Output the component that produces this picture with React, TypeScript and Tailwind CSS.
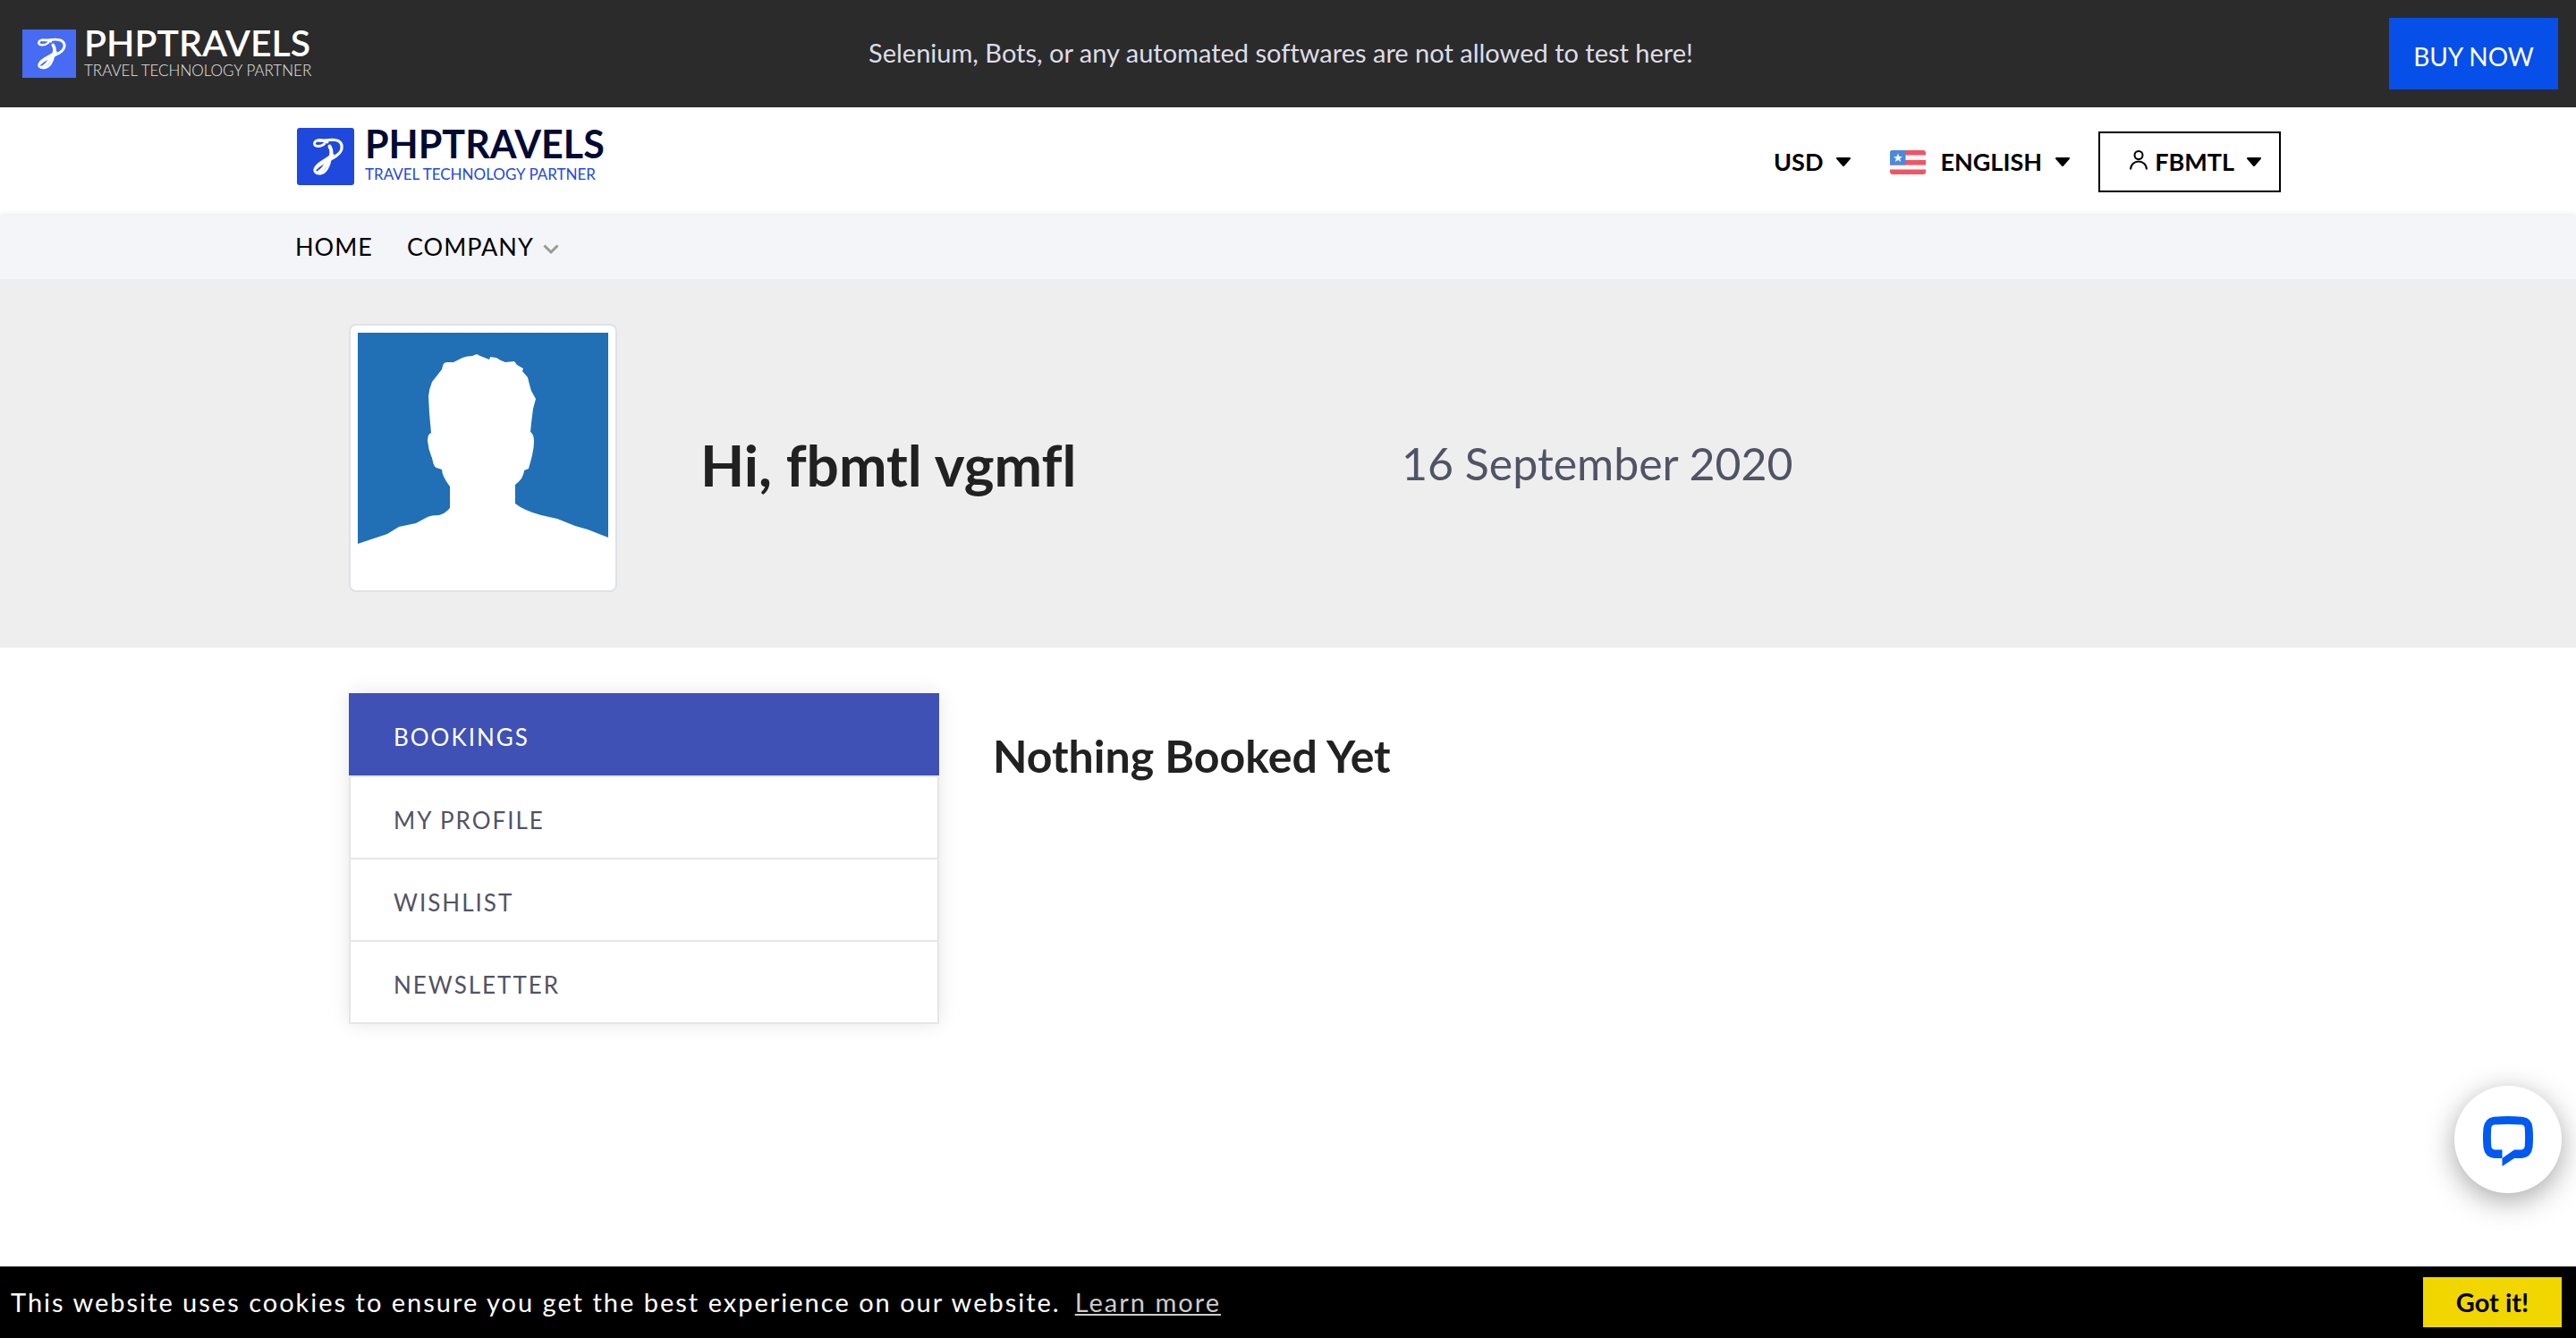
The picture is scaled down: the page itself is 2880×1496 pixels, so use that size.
type IconProps = { className?: string };

function RibbonMark({ className }: IconProps) {
  return (
    <svg viewBox="0 0 64 64" preserveAspectRatio="none" fill="none" stroke="#fff" strokeLinecap="round" strokeLinejoin="round" className={className} aria-hidden="true">
      <path d="M31 17.500C27 21.500 19.500 21.500 19.500 17.500C20 12.500 28 13 34 16" strokeWidth="2.800" />
      <path d="M24 14C30 15 36 12.500 42 13.500C49 14 51.500 19 49.500 25C46 34 28 37 21.500 45" strokeWidth="3.200" />
      <path d="M36.500 20.500C39.500 26 38.500 29 36.500 36" strokeWidth="4" />
      <path d="M37 35C36.500 42 32 50.500 26 51C20.500 51.500 18.500 48 21 44C25 38 34 35 40 30" strokeWidth="3" />
      <path d="M23.500 50C28 48 32 42 34.500 37" strokeWidth="4" />
    </svg>
  );
}

function Caret({ className }: IconProps) {
  return (
    <svg viewBox="0 0 16 10" className={className} aria-hidden="true">
      <path d="M1 1H15L8 9Z" fill="currentColor" stroke="currentColor" strokeWidth="2" strokeLinejoin="round" />
    </svg>
  );
}

function Flag({ className }: IconProps) {
  return (
    <svg viewBox="0 0 40 27" className={className} aria-hidden="true">
      <rect width="40" height="27" fill="#ef5565" />
      <rect y="5.500" width="40" height="5.500" fill="#f5f7fa" />
      <rect y="16.500" width="40" height="5" fill="#f5f7fa" />
      <rect width="17.500" height="16.500" fill="#4a89dc" />
      <path d="M9 3.500L10.400 7L14 7.200L11.200 9.500L12.200 13L9 11L5.800 13L6.800 9.500L4 7.200L7.600 7Z" fill="#f5f7fa" />
    </svg>
  );
}

function Avatar({ className }: IconProps) {
  return (
    <svg viewBox="0 0 280 280" className={className} role="img" aria-label="Profile photo">
      <rect width="280" height="280" fill="#fff" />
      <path
        fill="#216fb5"
        d="M0 0H280V229L257 220L243 216L223 208L205 204Q186 199 176 191V170Q181 166 183 163Q186 157 186 154L191 152L194 141Q197 130 197 122Q197 113 193 111L194 101L196 85L199 74L194 65L192 58L190 50L184 43L185 40L178 36L175 32L165 33L160 31L155 28L148 27L147 30L142 28L137 26L133 24L128 26Q122 26 117 28L107 33H100Q96 33 95 37L94 41L83 55Q80 62 79 71L80 90L82 112Q78 113 78 121Q79 131 83 140Q85 151 88 151L94 153Q94 160 103 172V196L100 199Q96 203 91 204Q82 204 78 206L65 213L46 217L33 225L0 236Z"
      />
    </svg>
  );
}

const menu = ["BOOKINGS", "MY PROFILE", "WISHLIST", "NEWSLETTER"];

export default function App() {
  return (
    <div className="flex min-h-screen flex-col bg-white font-['Lato',sans-serif] text-black [font-variant-ligatures:none]">
      <div className="grid h-[120px] grid-cols-[1fr_auto_1fr] items-center bg-[#2b2b2b] px-5">
        <a href="#" className="flex items-center gap-[9px] pl-[5px]">
          <span className="bg-[#476cf3]">
            <RibbonMark className="h-[54px] w-[60px]" />
          </span>
          <span className="flex flex-col gap-[3px] pb-[2px]">
            <span className="text-[41px] leading-9 font-semibold text-white">PHPTRAVELS</span>
            <span className="text-[17px] leading-5 font-light text-[#e6e6e6]">TRAVEL TECHNOLOGY PARTNER</span>
          </span>
        </a>
        <p className="pr-4 pb-[2px] text-[29px] text-[#dddde6]">Selenium, Bots, or any automated softwares are not allowed to test here!</p>
        <a href="#" className="flex h-20 w-[189px] items-center justify-center justify-self-end bg-[#064fe8] pt-[6px] text-[28px] text-white">
          BUY NOW
        </a>
      </div>

      <header className="h-[121px] bg-white">
        <div className="mx-auto flex max-w-[2220px] items-start justify-between pt-[23px]">
          <a href="#" className="flex items-center gap-3 pl-[2px]">
            <span className="rounded-[3px] bg-[#1f48dc]">
              <RibbonMark className="size-16" />
            </span>
            <span className="flex flex-col gap-1">
              <span className="text-[43px] leading-9 font-bold text-[#000a33]">PHPTRAVELS</span>
              <span className="text-[17px] leading-6 text-[#1f48dc]">TRAVEL TECHNOLOGY PARTNER</span>
            </span>
          </a>
          <div className="mt-1 flex h-[68px] items-stretch text-[27px] font-bold">
            <button type="button" aria-haspopup="menu" className="flex items-center gap-[15px]">
              USD
              <Caret className="h-[10px] w-4" />
            </button>
            <button type="button" aria-haspopup="menu" className="ml-11 flex items-center">
              <Flag className="mr-4 h-[27px] w-10 rounded-[3px]" />
              ENGLISH
              <Caret className="ml-[15px] h-[10px] w-4" />
            </button>
            <button type="button" aria-haspopup="menu" className="ml-8 flex w-[204px] items-center justify-end border-2 border-black pr-5">
              <svg viewBox="0 0 20 22" fill="none" stroke="currentColor" strokeWidth="2" className="mr-2 mb-1 h-[22px] w-5" aria-hidden="true">
                <circle cx="10" cy="5.500" r="4.500" />
                <path d="M1 21.500C1.500 9.500 18.500 9.500 19 21.500" />
              </svg>
              FBMTL
              <Caret className="ml-[14px] h-[10px] w-4" />
            </button>
          </div>
        </div>
      </header>

      <nav className="h-[71px] bg-[#f4f5f8] shadow-[0_0_6px_rgba(40,60,90,0.16)]">
        <div className="mx-auto flex h-full max-w-[2220px] items-center gap-[38px] text-[27px] tracking-[1px]">
          <a href="#">HOME</a>
          <button type="button" aria-haspopup="menu" className="flex items-center gap-[10px] tracking-[1px]">
            COMPANY
            <svg viewBox="0 0 18 12" fill="none" stroke="#999" strokeWidth="3" className="mt-1 h-3 w-[18px]" aria-hidden="true">
              <path d="M1.500 1.500L9 9L16.500 1.500" />
            </svg>
          </button>
        </div>
      </nav>

      <section className="relative bg-[#eee] pt-[50px] pb-[62px]">
        <div className="mx-auto grid max-w-[2220px] grid-cols-[393px_784px_1fr] items-center px-[60px]">
          <div className="size-[300px] rounded-lg border-2 border-[#dee2e6] bg-white p-2">
            <Avatar className="size-full" />
          </div>
          <h1 className="pt-4 text-[64px] leading-[72px] font-bold text-[#212121]">Hi, fbmtl vgmfl</h1>
          <p className="pt-3 text-[50px] leading-[60px] text-[#515365]">16 September 2020</p>
        </div>
      </section>

      <main className="mx-auto grid w-full max-w-[2220px] grid-cols-[660px_1fr] items-start gap-[60px] px-[60px] pt-[51px]">
        <ul className="text-[26px] tracking-[2px] shadow-[0_0_20px_rgba(0,0,0,0.1)]">
          {menu.map((item, i) => (
            <li key={item} className="last:border-b-2 last:border-[#e6e6e6]">
              <a
                href="#"
                className={
                  i === 0
                    ? "flex h-[92px] items-center bg-[#3f51b5] px-[50px] pt-[6px] text-white"
                    : "flex h-[92px] items-center border-x-2 border-t-2 border-[#e6e6e6] bg-white px-12 pt-[6px] text-[#515365]"
                }
              >
                {item}
              </a>
            </li>
          ))}
        </ul>
        <h2 className="pt-10 text-[50px] leading-[60px] font-bold text-[#212121]">Nothing Booked Yet</h2>
      </main>

      <button
        type="button"
        aria-label="Open chat"
        className="fixed right-4 bottom-[162px] flex size-[120px] items-center justify-center rounded-full bg-white pt-1 shadow-[0_8px_32px_rgba(0,0,0,0.35)]"
      >
        <svg viewBox="0 0 56 56" className="size-14" aria-hidden="true">
          <path
            fill="#0059f2"
            fillRule="evenodd"
            d="M12 .7Q28 -.5 44 .7Q55 2 55.500 13Q56.500 24 55.500 35Q54 46 43 47H35L21.500 56V37.500H13Q9.500 37 9.300 33.500Q8.500 23.500 9.300 13Q9.500 10 12.500 9.500Q28 8.500 43.500 9.500Q46.500 10 46.700 13Q47.500 23.500 46.700 33.500Q46.500 37 43 37.500H35L21.500 47H13Q2 46 .5 35Q-.5 24 .5 13Q2 2 12 .7Z"
          />
        </svg>
      </button>

      <div role="dialog" aria-label="Cookie consent" className="fixed inset-x-0 bottom-0 flex h-20 items-center justify-between bg-black pr-4 pl-3 text-[29px] text-white">
        <p className="tracking-[2px]">
          This website uses cookies to ensure you get the best experience on our website.
          <a href="#" className="ml-4 text-[#ccc] underline underline-offset-2">
            Learn more
          </a>
        </p>
        <button type="button" className="h-14 w-[155px] bg-[#f1d600] font-bold text-black">
          Got it!
        </button>
      </div>
    </div>
  );
}
